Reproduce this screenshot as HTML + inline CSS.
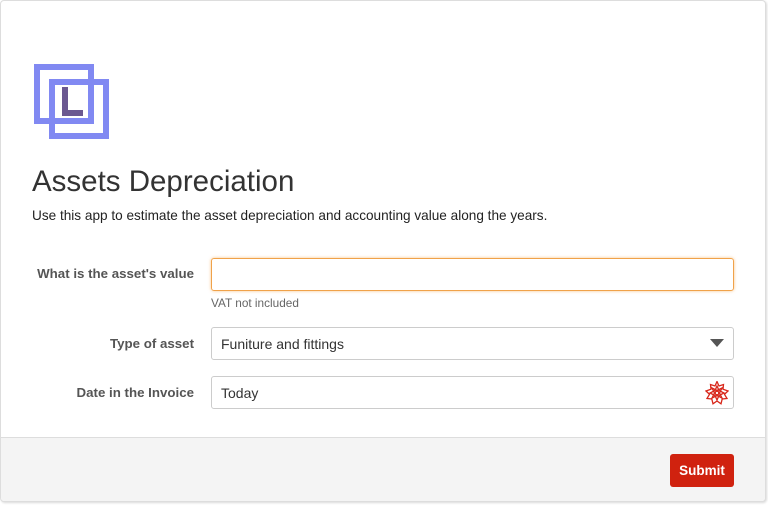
<!DOCTYPE html>
<html><head><meta charset="utf-8"><style>
*{box-sizing:border-box;margin:0;padding:0}
body{width:768px;height:505px;background:#fff;font-family:"Liberation Sans",sans-serif;overflow:hidden;position:relative}
.card{position:absolute;left:0;top:0;width:766px;height:502px;border:1px solid #ddd;border-radius:4px;background:#fff;box-shadow:1px 1px 2px rgba(0,0,0,.15);overflow:hidden}
h1{position:absolute;left:31px;top:164px;font-size:29.5px;font-weight:normal;color:#333}
.desc{position:absolute;left:31px;top:207px;font-size:13.6px;color:#222}
.lbl{position:absolute;right:571px;font-size:13.3px;font-weight:bold;color:#555;text-align:right;white-space:nowrap}
.inp{position:absolute;left:210px;width:523px;height:33px;border:1px solid #ccc;border-radius:3px;font-size:14px;color:#333;padding:8px 9px}
.foc{border-color:#f0a24a;box-shadow:0 0 3px rgba(245,160,60,.6)}
.help{position:absolute;left:210px;top:295px;font-size:11.8px;color:#666}
.foot{position:absolute;left:0;top:436px;width:766px;height:66px;background:#f4f4f4;border-top:1px solid #ddd}
.btn{position:absolute;left:669px;top:453px;width:64px;height:33px;background:#d0220f;border-radius:3px;color:#fff;font-size:13.5px;text-align:center;line-height:33px;font-weight:bold}
</style></head><body>
<div class="card">
<svg style="position:absolute;left:0;top:0" width="120" height="150">
<rect x="36" y="66" width="54" height="54" fill="none" stroke="#8189f2" stroke-width="6"/>
<rect x="51" y="81" width="54" height="54" fill="none" stroke="#8189f2" stroke-width="6"/>
<path d="M64 86V112H82" fill="none" stroke="#6b5891" stroke-width="6"/>
</svg>
<h1>Assets Depreciation</h1>
<div class="desc">Use this app to estimate the asset depreciation and accounting value along the years.</div>
<div class="lbl" style="top:265px">What is the asset's value</div>
<div class="inp foc" style="top:257px"></div>
<div class="help">VAT not included</div>
<div class="lbl" style="top:335px">Type of asset</div>
<div class="inp" style="top:326px">Funiture and fittings
<svg style="position:absolute;right:9px;top:11px" width="14" height="9"><path d="M0 0H14L7 8Z" fill="#555"/></svg></div>
<div class="lbl" style="top:384px">Date in the Invoice</div>
<div class="inp" style="top:375px">Today
<svg style="position:absolute;right:4px;top:4px" width="24" height="24" viewBox="0 0 24 24"><g fill="none" stroke="#d8261a" stroke-width="1.3">
<path d="M12 0.5L14 5 18.5 3.5 18 8.2 23 10 19.5 13.3 22 17.5 17.2 18 16 22.8 12 20 8 22.8 6.8 18 2 17.5 4.5 13.3 1 10 6 8.2 5.5 3.5 10 5Z"/>
<path d="M12 5L14 9.5 19 12 14 14.5 12 19 10 14.5 5 12 10 9.5Z"/>
<path d="M7 7L12 9.5 17 7 14.5 12 17 17 12 14.5 7 17 9.5 12Z"/>
<circle cx="12" cy="12" r="1.8"/></g></svg></div>
<div class="foot"></div>
<div class="btn">Submit</div>
</div>
</body></html>
